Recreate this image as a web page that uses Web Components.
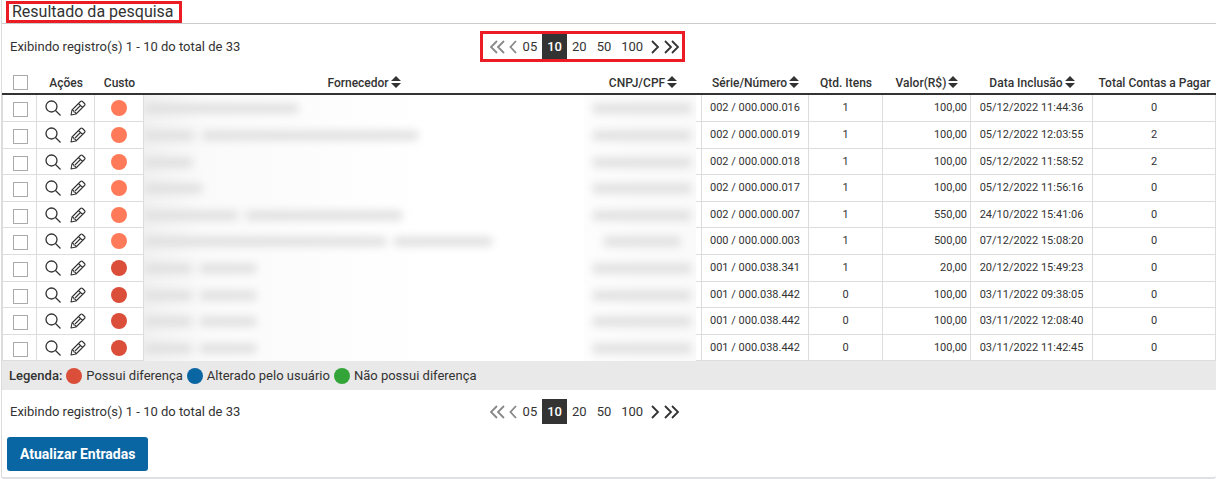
<!DOCTYPE html>
<html lang="pt-BR">
<head>
<meta charset="utf-8">
<title>Resultado da pesquisa</title>
<style>
  body {
    margin: 0;
    background: #fff;
    color: #333;
    font: 13px/16px Roboto, "Liberation Sans", sans-serif;
  }
</style>
</head>
<body>
<results-panel>
  <highlight-box slot="title" class="title">Resultado da pesquisa</highlight-box>
  <results-bar>
    <highlight-box><results-pager></results-pager></highlight-box>
  </results-bar>
  <results-table></results-table>
  <results-legend>
    <legend-item color="#da4e3a">Possui diferença</legend-item>
    <legend-item color="#0a66a3">Alterado pelo usuário</legend-item>
    <legend-item color="#33a538">Não possui diferença</legend-item>
  </results-legend>
  <results-bar compact>
    <highlight-box off><results-pager></results-pager></highlight-box>
  </results-bar>
  <primary-button>Atualizar Entradas</primary-button>
</results-panel>

<script>
const html = String.raw;

function define(name, markup, setup) {
  customElements.define(
    name,
    class extends HTMLElement {
      constructor() {
        super();
        this.attachShadow({ mode: "open" });
        this.shadowRoot.innerHTML = markup;
      }

      connectedCallback() {
        setup?.(this, this.shadowRoot);
      }
    },
  );
}

define("results-panel", html`
  <style>
    :host {
      display: block;
      margin: 0 1px;
      border-left: 1px solid #dcdcdc;
      border-bottom: 2px solid #dfe0e4;
      border-radius: 0 0 3px 3px;
      padding-bottom: 6px;
    }
    header {
      display: flex;
      padding: 1px 4px 0;
      border-bottom: 1px solid #ccc;
    }
    h1 {
      margin: 0;
      font-size: 16px;
      font-weight: 400;
      line-height: 16px;
    }
  </style>
  <header><h1><slot name="title"></slot></h1></header>
  <slot></slot>
`);

define("highlight-box", html`
  <style>
    :host {
      display: block;
      box-sizing: border-box;
      border: 3px solid #ec1c24;
    }
    :host(.title) {
      padding: 0 5px 0 3px;
    }
    :host([off]) {
      border-color: transparent;
    }
  </style>
  <slot></slot>
`);

define("results-bar", html`
  <style>
    :host {
      display: grid;
      grid-template-columns: 2fr 3fr;
      align-items: center;
      height: 45px;
    }
    :host([compact]) {
      height: 43px;
    }
    p {
      margin: 0;
      padding-left: 8px;
    }
    div {
      display: flex;
      margin-left: -8px;
    }
  </style>
  <p>Exibindo registro(s) 1 - 10 do total de 33</p>
  <div><slot></slot></div>
`);

define("results-pager", html`
  <style>
    :host {
      display: block;
    }
    nav {
      display: flex;
      align-items: center;
      padding: 0 2px 0 6px;
    }
    a {
      padding: 0 5px;
      color: inherit;
      line-height: 25px;
      text-decoration: none;
    }
    a[aria-current] {
      background: #333;
      color: #fff;
      font-weight: 500;
    }
    button {
      display: flex;
      margin: 0;
      padding: 0;
      border: 0;
      background: none;
      color: #333;
    }
    button:disabled {
      color: #888;
    }
    .prev {
      margin: 0 1px 0 4px;
    }
    .next {
      margin: 0 4px 0 3px;
    }
    svg {
      display: block;
      fill: none;
      stroke: currentColor;
      stroke-width: 1.8;
    }
  </style>
  <nav aria-label="Registros por página">
    <button disabled aria-label="Primeira página">
      <svg width="16" height="14"><path d="M8 1 2 7l6 6M15 1 9 7l6 6"/></svg>
    </button>
    <button class="prev" disabled aria-label="Página anterior">
      <svg width="8" height="14"><path d="M7 1 1.500 7 7 13"/></svg>
    </button>
    <a href="#05">05</a>
    <a href="#10" aria-current="true">10</a>
    <a href="#20">20</a>
    <a href="#50">50</a>
    <a href="#100">100</a>
    <button class="next" aria-label="Próxima página">
      <svg width="9" height="14"><path d="m1 1 6 6-6 6"/></svg>
    </button>
    <button aria-label="Última página">
      <svg width="16" height="14"><path d="m1 1 6 6-6 6M8 1l6 6-6 6"/></svg>
    </button>
  </nav>
`);

// The supplier and tax id columns are hidden: each row only keeps the widths
// of the smudges that stand in for the words.
const rows = [
  { dot: "#ff7a59", name: [154], id: 98, number: "002 / 000.000.016", items: 1, value: "100,00", date: "05/12/2022 11:44:36", total: 0 },
  { dot: "#ff7a59", name: [50, 216], id: 98, number: "002 / 000.000.019", items: 1, value: "100,00", date: "05/12/2022 12:03:55", total: 2 },
  { dot: "#ff7a59", name: [48], id: 98, number: "002 / 000.000.018", items: 1, value: "100,00", date: "05/12/2022 11:58:52", total: 2 },
  { dot: "#ff7a59", name: [58], id: 98, number: "002 / 000.000.017", items: 1, value: "100,00", date: "05/12/2022 11:56:16", total: 0 },
  { dot: "#ff7a59", name: [94, 156], id: 98, number: "002 / 000.000.007", items: 1, value: "550,00", date: "24/10/2022 15:41:06", total: 0 },
  { dot: "#ff7a59", name: [242, 98], id: 76, number: "000 / 000.000.003", items: 1, value: "500,00", date: "07/12/2022 15:08:20", total: 0 },
  { dot: "#da4e3a", name: [48, 56], id: 98, number: "001 / 000.038.341", items: 1, value: "20,00", date: "20/12/2022 15:49:23", total: 0 },
  { dot: "#da4e3a", name: [48, 56], id: 98, number: "001 / 000.038.442", items: 0, value: "100,00", date: "03/11/2022 09:38:05", total: 0 },
  { dot: "#da4e3a", name: [48, 56], id: 98, number: "001 / 000.038.442", items: 0, value: "100,00", date: "03/11/2022 12:08:40", total: 0 },
  { dot: "#da4e3a", name: [48, 56], id: 98, number: "001 / 000.038.442", items: 0, value: "100,00", date: "03/11/2022 11:42:45", total: 0 },
];

define("color-dot", html`
  <style>
    :host {
      display: block;
      width: 16px;
      height: 16px;
      border-radius: 50%;
      background: var(--dot, #ccc);
    }
  </style>
`);

define("row-actions", html`
  <style>
    :host {
      display: flex;
      justify-content: center;
      gap: 9px;
    }
    button {
      margin: 0;
      padding: 0;
      border: 0;
      background: none;
      color: #333;
    }
    svg {
      display: block;
      fill: none;
      stroke: currentColor;
      stroke-width: 1.3;
      stroke-linejoin: round;
    }
    .edit {
      stroke-width: 1.1;
    }
  </style>
  <button aria-label="Visualizar">
    <svg width="16" height="16"><circle cx="6.500" cy="6.500" r="5.500"/><path d="m10.500 10.500 5 5"/></svg>
  </button>
  <button aria-label="Editar">
    <svg class="edit" width="16" height="16"><path d="M1 15 2 10 10.500 1.500q1-1 2 0l2 2q1 1 0 2L6 14zM2 10q2 0 2 2 2 0 2 2M8.500 3.500l4 4M10 6l-5 5"/></svg>
  </button>
`);

define("results-table", html`
  <style>
    :host {
      display: block;
    }
    table {
      width: 100%;
      border-spacing: 0;
      table-layout: fixed;
      font-size: 11px;
      line-height: 14px;
      text-align: center;
    }
    th, td {
      box-sizing: border-box;
      padding: 0;
      white-space: nowrap;
    }
    th {
      height: 26px;
      padding-top: 3px;
      border-bottom: 2px solid #333;
      font-size: 12px;
      font-weight: 500;
    }
    td {
      height: 27px;
      border: solid #ddd;
      border-width: 0 1px 1px 0;
    }
    tr:nth-child(5n) td, tr:nth-child(5n + 3) td {
      height: 26px;
    }
    td:first-child {
      border-left-width: 1px;
      padding-top: 3px;
    }
    th:first-child, td:first-child {
      padding-left: 1px;
    }
    .value {
      padding-right: 3px;
      text-align: right;
    }
    input {
      appearance: none;
      display: block;
      box-sizing: border-box;
      width: 15px;
      height: 15px;
      margin: 0 auto;
      border: 1px solid #aaa;
      background: #fff;
    }
    color-dot {
      margin: 0 auto;
    }
    .sort {
      padding: 0;
      border: 0;
      background: none;
      color: inherit;
      font: inherit;
    }
    .sort svg {
      margin-left: 2px;
      vertical-align: -1px;
      fill: currentColor;
    }
    .name, .id {
      border-width: 0;
      overflow: hidden;
    }
    .name {
      background: linear-gradient(90deg, #f1f1f1, #fafafa 60px, #fff 280px);
    }
    .id {
      border-right-width: 1px;
      background:
        linear-gradient(#ddd, #ddd) right bottom / 5px 1px no-repeat,
        linear-gradient(90deg, #fdfdfd, #fafafa 50%) left / calc(100% - 5px) 100% no-repeat;
    }
    .smudge {
      display: flex;
      gap: 8px;
      filter: blur(4px);
    }
    .id .smudge {
      justify-content: center;
      padding-right: 2px;
    }
    .smudge i {
      height: 9px;
      background: #dedede;
    }
  </style>
  <table>
    <colgroup>
      <col style="width: 35px">
      <col style="width: 58px">
      <col style="width: 49px">
      <col>
      <col style="width: 118px">
      <col style="width: 107px">
      <col style="width: 74px">
      <col style="width: 88px">
      <col style="width: 122px">
      <col style="width: 123px">
    </colgroup>
    <thead><tr></tr></thead>
    <tbody></tbody>
  </table>
`, (host, root) => {
  const columns = [
    ["Ações"],
    ["Custo"],
    ["Fornecedor", true],
    ["CNPJ/CPF", true],
    ["Série/Número", true],
    ["Qtd. Itens"],
    ["Valor(R$)", true],
    ["Data Inclusão", true],
    ["Total Contas a Pagar"],
  ];
  const arrows = html`<svg width="10" height="12"><path d="M0 5 5 0l5 5zM0 7h10l-5 5z"/></svg>`;
  const heads = columns.map(([label, sortable]) =>
    sortable
      ? html`<th scope="col"><button class="sort">${label}${arrows}</button></th>`
      : html`<th scope="col">${label}</th>`,
  );
  root.querySelector("thead tr").innerHTML =
    html`<th><input type="checkbox" aria-label="Selecionar todos"></th>` + heads.join("");

  const smudge = (widths) =>
    html`<div class="smudge">${widths.map((w) => `<i style="width: ${w}px"></i>`).join("")}</div>`;

  root.querySelector("tbody").innerHTML = rows
    .map((row, i) => html`
      <tr>
        <td><input type="checkbox" aria-label="Selecionar registro ${i + 1}"></td>
        <td><row-actions></row-actions></td>
        <td><color-dot style="--dot: ${row.dot}"></color-dot></td>
        <td class="name">${smudge(row.name)}</td>
        <td class="id">${smudge([row.id])}</td>
        <td>${row.number}</td>
        <td>${row.items}</td>
        <td class="value">${row.value}</td>
        <td>${row.date}</td>
        <td>${row.total}</td>
      </tr>`)
    .join("");
});

define("results-legend", html`
  <style>
    :host {
      display: flex;
      align-items: center;
      gap: 4px;
      height: 29px;
      padding-left: 7px;
      background: #e9e9e9;
    }
    strong {
      font-weight: 500;
    }
  </style>
  <strong>Legenda:</strong>
  <slot></slot>
`);

define("legend-item", html`
  <style>
    :host {
      display: flex;
      align-items: center;
      gap: 4px;
    }
  </style>
  <color-dot></color-dot>
  <span><slot></slot></span>
`, (host, root) => {
  root.querySelector("color-dot").style.setProperty("--dot", host.getAttribute("color"));
});

define("primary-button", html`
  <style>
    :host {
      display: flex;
      padding: 4px 5px 0;
    }
    button {
      height: 34px;
      padding: 0 13px;
      border: 0;
      border-radius: 3px;
      background: #0a66a3;
      color: #fff;
      font: 700 14px/16px Roboto, "Liberation Sans", sans-serif;
    }
  </style>
  <button><slot></slot></button>
`);
</script>
</body>
</html>
